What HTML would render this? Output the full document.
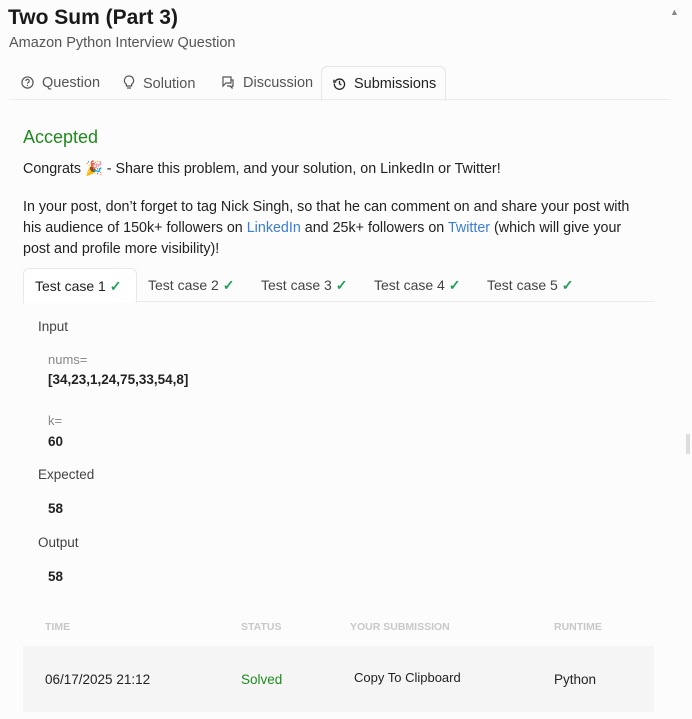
<!DOCTYPE html>
<html><head><style>
body{margin:0;width:692px;height:719px;background:#fcfcfc;font-family:"Liberation Sans",sans-serif;color:#222;position:relative;overflow:hidden}
.a{position:absolute;white-space:nowrap}
h1{position:absolute;left:8px;top:6px;margin:0;font-size:21px;font-weight:bold;color:#1a1a1a}
.sub{left:9px;top:35px;font-size:14.5px;color:#555}
.tab{top:75px;font-size:14.5px;color:#555}
.tab svg{vertical-align:-2px;margin-right:8px}
.p{left:23px;font-size:14.3px;color:#222}
.lnk{color:#3b7dd8}
.tc{top:277px;font-size:14px;color:#444}
.ck{color:#22a05a;font-weight:bold}
.lbl{font-size:13.5px;color:#444}
.gray{color:#888;font-size:13px}
.b{font-weight:bold;font-size:13.5px;color:#222}
.th{top:621px;font-size:10.5px;font-weight:bold;color:#c8c8c8}
</style></head><body>
<h1>Two Sum (Part 3)</h1>
<div class="a sub">Amazon Python Interview Question</div>
<div class="a" style="left:670px;top:7px;font-size:9px;color:#888">▲</div>
<div class="a" style="left:321px;top:66px;width:123px;height:34px;border:1px solid #e6e6e6;border-bottom:none;border-radius:6px 6px 0 0;background:#fcfcfc"></div>
<div class="a" style="left:9px;top:99px;width:660px;height:1px;background:#ececec"></div>
<div class="a tab" style="left:21px"><svg width="13" height="13" viewBox="0 0 14 14"><circle cx="7" cy="7" r="6" fill="none" stroke="#555" stroke-width="1.3"/><path d="M5.2 5.4a1.8 1.8 0 1 1 2.4 1.7c-.5.2-.6.5-.6 1v.3" fill="none" stroke="#555" stroke-width="1.2"/><circle cx="7" cy="10.2" r=".7" fill="#555"/></svg>Question</div>
<div class="a tab" style="left:123px"><svg width="12" height="15" viewBox="0 0 12 15"><path d="M6 1a4.5 4.5 0 0 0-2.6 8.2V11h5.2V9.2A4.5 4.5 0 0 0 6 1zM4 13h4" fill="none" stroke="#555" stroke-width="1.2"/></svg>Solution</div>
<div class="a tab" style="left:221px"><svg width="14" height="14" viewBox="0 0 14 14"><path d="M2 2h8v6H5l-3 3V8H2zM10 5h2v6h-1v2l-2-2H6" fill="none" stroke="#555" stroke-width="1.2"/></svg>Discussion</div>
<div class="a tab" style="left:333px;top:76px;color:#222"><svg width="13" height="13" viewBox="0 0 14 14"><path d="M2.5 4.5A5.5 5.5 0 1 1 1.5 7M1 3v2.5h2.5M7 4v3.3l2 1.3" fill="none" stroke="#222" stroke-width="1.4"/></svg>Submissions</div>
<div class="a" style="left:23px;top:127px;font-size:18px;color:#1f8a1f">Accepted</div>
<div class="a p" style="top:161px">Congrats 🎉 - Share this problem, and your solution, on LinkedIn or Twitter!</div>
<div class="a p" style="top:197px;line-height:21px;white-space:normal;width:625px">In your post, don’t forget to tag Nick Singh, so that he can comment on and share your post with his audience of 150k+ followers on <span class="lnk">LinkedIn</span> and 25k+ followers on <span class="lnk">Twitter</span> (which will give your post and profile more visibility)!</div>
<div class="a" style="left:23px;top:268px;width:112px;height:34px;border:1px solid #e8e8e8;border-bottom:none;border-radius:6px 6px 0 0;background:#fff"></div>
<div class="a" style="left:135px;top:301px;width:519px;height:1px;background:#ececec"></div>
<div class="a tc" style="left:35px;top:278px;color:#222">Test case 1 <span class="ck">✓</span></div>
<div class="a tc" style="left:148px">Test case 2 <span class="ck">✓</span></div>
<div class="a tc" style="left:261px">Test case 3 <span class="ck">✓</span></div>
<div class="a tc" style="left:374px">Test case 4 <span class="ck">✓</span></div>
<div class="a tc" style="left:487px">Test case 5 <span class="ck">✓</span></div>
<div class="a lbl" style="left:38px;top:319px">Input</div>
<div class="a gray" style="left:48px;top:352px">nums=</div>
<div class="a b" style="left:48px;top:372px">[34,23,1,24,75,33,54,8]</div>
<div class="a gray" style="left:48px;top:413px">k=</div>
<div class="a b" style="left:48px;top:434px">60</div>
<div class="a lbl" style="left:38px;top:467px">Expected</div>
<div class="a b" style="left:48px;top:501px">58</div>
<div class="a lbl" style="left:38px;top:535px">Output</div>
<div class="a b" style="left:48px;top:569px">58</div>
<div class="a" style="left:686px;top:434px;width:4px;height:20px;background:#ddd"></div>
<div class="a th" style="left:45px">TIME</div>
<div class="a th" style="left:241px">STATUS</div>
<div class="a th" style="left:350px">YOUR SUBMISSION</div>
<div class="a th" style="left:554px">RUNTIME</div>
<div class="a" style="left:23px;top:646px;width:631px;height:66px;background:#f5f5f5"></div>
<div class="a" style="left:45px;top:672px;font-size:13.5px">06/17/2025 21:12</div>
<div class="a" style="left:241px;top:672px;font-size:13.5px;color:#1f8a1f">Solved</div>
<div class="a" style="left:354px;top:670px;font-size:13px">Copy To Clipboard</div>
<div class="a" style="left:554px;top:672px;font-size:13.5px">Python</div>
</body></html>
